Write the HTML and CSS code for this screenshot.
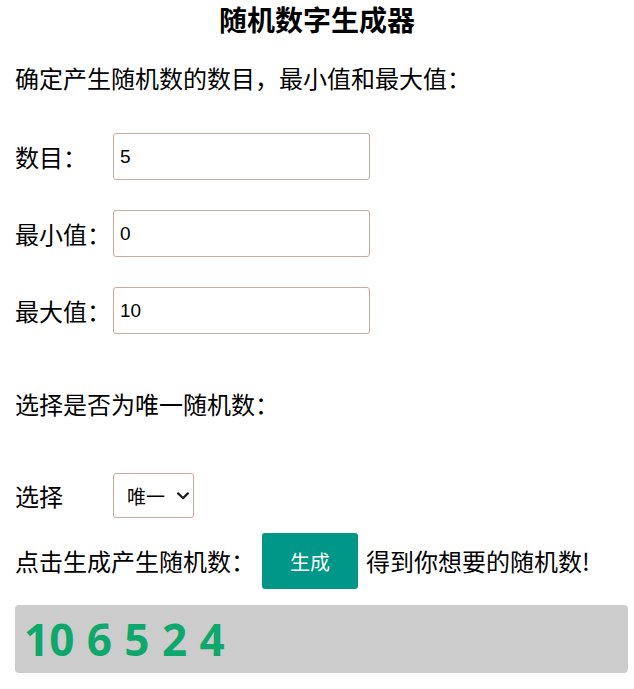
FILE: index.html
```html
<!DOCTYPE html>
<html lang="zh-CN">
<head>
<meta charset="utf-8">
<title>随机数字生成器</title>
<link rel="stylesheet" href="styles.css">
</head>
<body>
<h1 class="title">随机数字生成器</h1>
<div class="content">
  <p class="intro">确定产生随机数的数目，最小值和最大值：</p>
  <div class="field first"><label class="label">数目：</label><input class="num" type="text" value="5"></div>
  <div class="field"><label class="label">最小值：</label><input class="num" type="text" value="0"></div>
  <div class="field"><label class="label">最大值：</label><input class="num" type="text" value="10"></div>
  <p class="intro second">选择是否为唯一随机数：</p>
  <div class="field pick"><label class="label">选择</label>
    <span class="select-wrap">
      <select class="choice"><option>唯一</option><option>不唯一</option></select>
      <svg class="chev" width="12" height="8" viewBox="0 0 12 8" aria-hidden="true"><path d="M1.2 1.4 L6 6.2 L10.8 1.4" fill="none" stroke="#1a1a1a" stroke-width="2.2" stroke-linecap="round" stroke-linejoin="round"/></svg>
    </span>
  </div>
  <div class="action"><span>点击生成产生随机数：</span><button class="gen" type="button">生成</button><span>得到你想要的随机数!</span></div>
  <div class="result">10 6 5 2 4</div>
</div>
</body>
</html>
```
FILE: styles.css
```css
html, body {
  margin: 0;
  padding: 0;
  background: #fff;
}
body {
  font-family: "Noto Sans CJK SC", "Noto Sans", sans-serif;
  color: #000;
  width: 634px;
}
.title {
  margin: 0;
  font-size: 28px;
  line-height: 38px;
  font-weight: 700;
  text-align: center;
}
.content {
  padding-left: 15px;
  width: 613px;
  display: flex;
  flex-direction: column;
}
.intro {
  margin: 22px 0 0;
  font-size: 24px;
  line-height: 36px;
}
.intro.second {
  margin-top: 52px;
}
.field {
  display: flex;
  align-items: center;
  margin-top: 30px;
  height: 47px;
}
.field.first {
  margin-top: 37px;
}
.label {
  width: 98px;
  font-size: 24px;
  line-height: 36px;
  flex: none;
  white-space: nowrap;
}
.num {
  box-sizing: border-box;
  width: 257px;
  height: 47px;
  margin: 0;
  border: 1px solid #c9aa9c;
  border-radius: 3px;
  padding: 0 6px;
  font-family: "Liberation Sans", Arial, sans-serif;
  font-size: 19px;
  color: #000;
  outline: none;
}
.field.pick {
  margin-top: 51px;
  height: 45px;
}
.select-wrap {
  position: relative;
  display: inline-flex;
}
.choice {
  box-sizing: border-box;
  width: 81px;
  height: 45px;
  margin: 0;
  border: 1px solid #c9aa9c;
  border-radius: 3px;
  padding: 0 4px 0 13px;
  font-family: "Noto Sans CJK SC", sans-serif;
  font-size: 19px;
  color: #000;
  background: #fff;
  appearance: none;
  -webkit-appearance: none;
}
.chev {
  position: absolute;
  right: 5px;
  top: 19px;
  pointer-events: none;
}
.action {
  margin-top: 15px;
  display: flex;
  align-items: center;
  gap: 8px;
  font-size: 24px;
  line-height: 36px;
  white-space: nowrap;
}
.gen {
  width: 96px;
  height: 56px;
  margin: 0 0 0 -1px;
  border: none;
  border-radius: 3px;
  background: #009688;
  color: #fff;
  font-family: "Noto Sans CJK SC", sans-serif;
  font-size: 20px;
  cursor: pointer;
}
.result {
  margin-top: 16px;
  height: 68px;
  box-sizing: border-box;
  background: #cccccc;
  border-radius: 4px;
  padding-left: 9px;
  display: flex;
  align-items: center;
  font-family: "Open Sans", "Noto Sans", sans-serif;
  font-weight: 700;
  font-size: 44px;
  word-spacing: 1px;
  color: #0fa86c;
}
```
